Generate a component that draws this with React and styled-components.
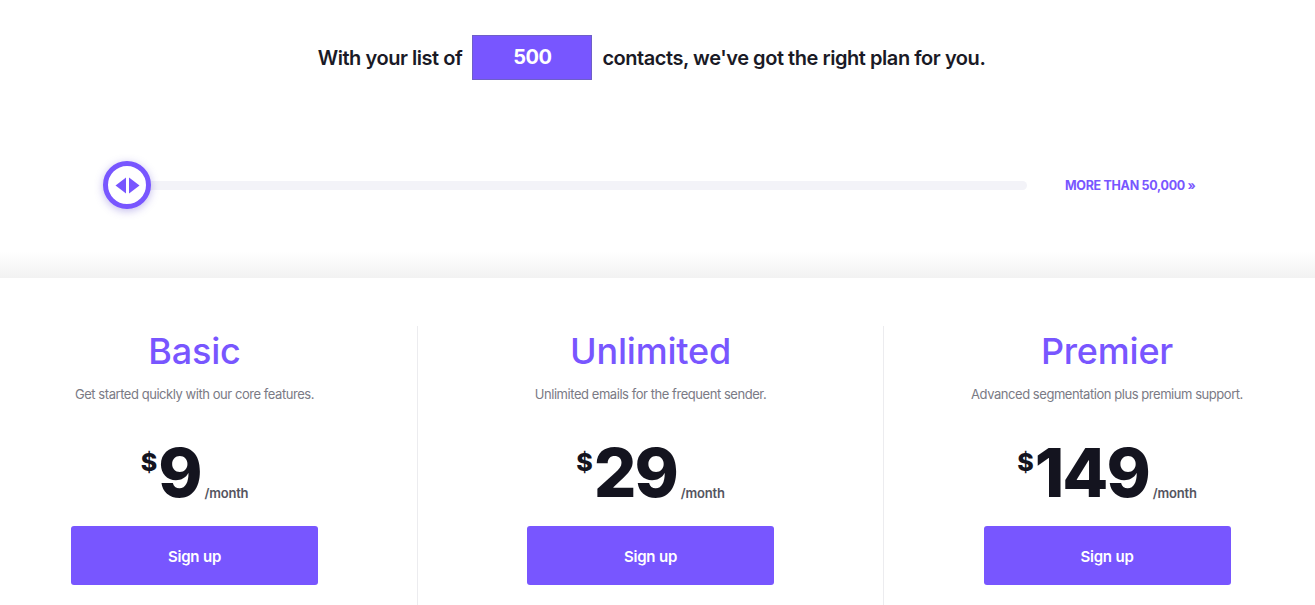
import React from "react";
import styled, { createGlobalStyle } from "styled-components";

const Global = createGlobalStyle`
  html, body { margin: 0; padding: 0; background: #fff; }
  body { font-family: Inter, "Noto Sans", sans-serif; color: #14141f; }
  * { box-sizing: border-box; }
`;

const Page = styled.div`
  width: 1315px;
  height: 605px;
  overflow: hidden;
  display: flex;
  flex-direction: column;
`;

const Top = styled.section`
  height: 278px;
  display: flex;
  flex-direction: column;
  background: linear-gradient(to bottom, #ffffff 0, #ffffff 252px, #f2f2f2 278px);
`;

const Headline = styled.div`
  display: flex;
  align-items: center;
  justify-content: center;
  gap: 10px;
  margin-top: 35px;
  height: 45px;
  font-size: 20px;
  font-weight: 600;
  letter-spacing: -0.45px;
  color: #1a1a26;
  padding-right: 12px;
`;

const CountBox = styled.div`
  width: 120px;
  height: 45px;
  padding-bottom: 2px;
  background: #7856ff;
  border: 1px solid #6e5fc7;
  color: #fff;
  font-size: 20px;
  font-weight: 700;
  display: flex;
  align-items: center;
  justify-content: center;
`;

const SliderRow = styled.div`
  display: flex;
  align-items: center;
  margin-top: 80px;
  padding-left: 103px;
  height: 50px;
`;

const Track = styled.div`
  position: relative;
  width: 924px;
  height: 9px;
  border-radius: 5px;
  background: #f3f3f8;
`;

const Thumb = styled.div`
  position: absolute;
  left: 0;
  top: 50%;
  transform: translateY(-50%);
  width: 48px;
  height: 48px;
  border-radius: 50%;
  background: #fff;
  border: 5px solid #7856ff;
  box-shadow: 0 2px 8px rgba(80, 60, 200, 0.35);
  display: flex;
  align-items: center;
  justify-content: center;
`;

const MoreLink = styled.a`
  margin-left: 38px;
  font-size: 12.5px;
  font-weight: 700;
  color: #7856ff;
  letter-spacing: -0.3px;
  text-decoration: none;
  text-transform: uppercase;
`;

const Plans = styled.section`
  flex: 1;
  display: grid;
  grid-template-columns: 417px 466px 1fr;
  padding-top: 48px;
  background: #fff;
`;

const Plan = styled.div`
  display: flex;
  flex-direction: column;
  align-items: center;
  padding-left: ${(p) => p.$pl}px;
  padding-right: ${(p) => p.$pr}px;
  border-left: ${(p) => (p.$divider ? "1px solid #ececef" : "none")};
`;

const PlanName = styled.h2`
  margin: 4px 0 0;
  font-size: 36px;
  line-height: 42px;
  font-weight: 500;
  color: #7856ff;
  letter-spacing: -0.2px;
`;

const PlanDesc = styled.p`
  margin: 13px 0 0;
  font-size: 13px;
  line-height: 18px;
  font-weight: 400;
  color: #7a7a85;
  letter-spacing: -0.45px;
`;

const PriceRow = styled.div`
  display: flex;
  align-items: flex-start;
  margin-top: 35px;
  height: 70px;
`;

const Currency = styled.span`
  font-size: 25px;
  font-weight: 800;
  line-height: 1;
  margin-top: 12px;
  margin-right: 1px;
  color: #14141f;
`;

const Amount = styled.span`
  font-size: 67px;
  line-height: 70px;
  font-weight: 800;
  letter-spacing: -2px;
  color: #14141f;
`;

const Per = styled.span`
  align-self: flex-end;
  margin-left: 4px;
  margin-bottom: 7px;
  font-size: 13px;
  font-weight: 600;
  color: #55555f;
  letter-spacing: -0.2px;
`;

const SignUp = styled.button`
  margin-top: 18px;
  width: 247px;
  height: 59px;
  padding-top: 3px;
  border: none;
  border-radius: 3px;
  background: #7856ff;
  color: #fff;
  font-family: inherit;
  font-size: 15px;
  font-weight: 600;
  letter-spacing: -0.2px;
  cursor: pointer;
`;

const plans = [
  { name: "Basic", desc: "Get started quickly with our core features.", price: "9", pl: 0, pr: 28, divider: false },
  { name: "Unlimited", desc: "Unlimited emails for the frequent sender.", price: "29", pl: 0, pr: 0, divider: true },
  { name: "Premier", desc: "Advanced segmentation plus premium support.", price: "149", pl: 15, pr: 0, divider: true },
];

export default function App() {
  return (
    <Page>
      <Global />
      <Top>
        <Headline>
          <span>With your list of</span>
          <CountBox>500</CountBox>
          <span>contacts, we've got the right plan for you.</span>
        </Headline>
        <SliderRow>
          <Track>
            <Thumb>
              <svg width="25" height="17" viewBox="0 0 25 17">
                <path d="M11 0.5 L0.5 8.5 L11 16.5 Z" fill="#7856ff" />
                <path d="M14 0.5 L24.5 8.5 L14 16.5 Z" fill="#7856ff" />
              </svg>
            </Thumb>
          </Track>
          <MoreLink href="#">More than 50,000 »</MoreLink>
        </SliderRow>
      </Top>
      <Plans>
        {plans.map((p) => (
          <Plan key={p.name} $pl={p.pl} $pr={p.pr} $divider={p.divider}>
            <PlanName>{p.name}</PlanName>
            <PlanDesc>{p.desc}</PlanDesc>
            <PriceRow>
              <Currency>$</Currency>
              <Amount>{p.price}</Amount>
              <Per>/month</Per>
            </PriceRow>
            <SignUp>Sign up</SignUp>
          </Plan>
        ))}
      </Plans>
    </Page>
  );
}
